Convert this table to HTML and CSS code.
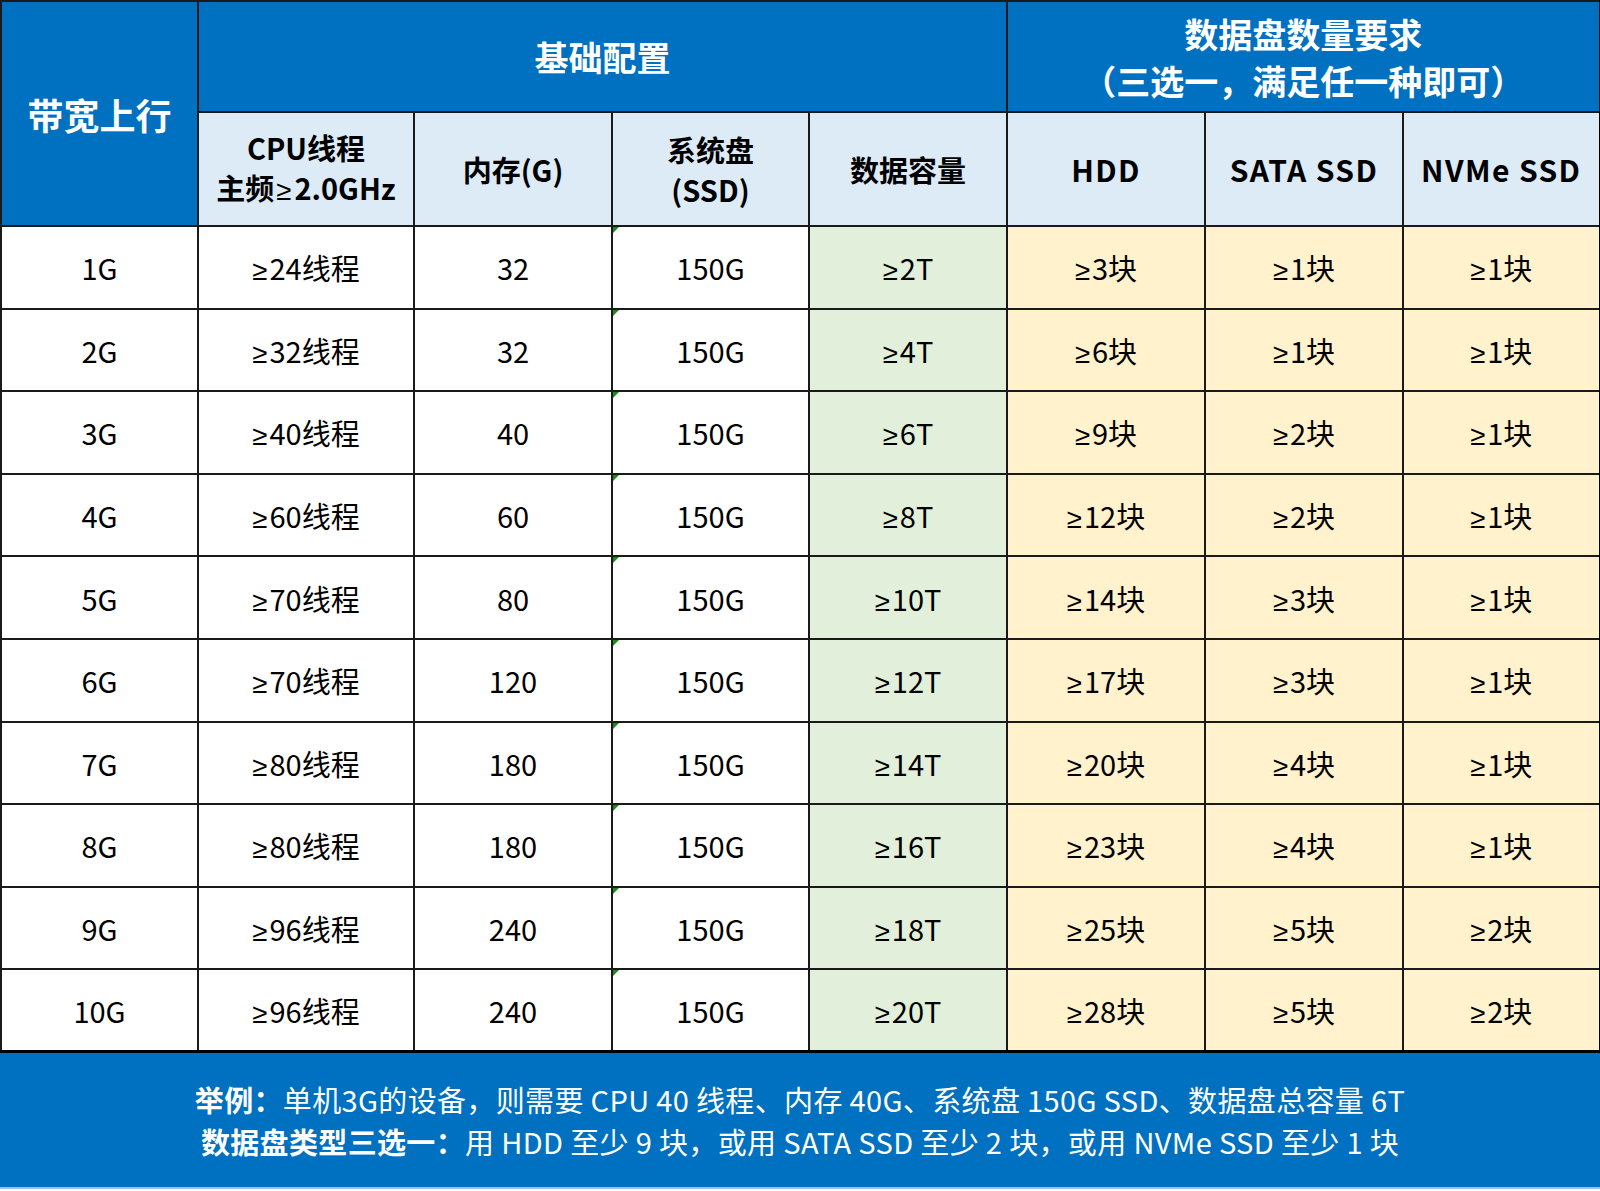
FILE: index.html
```html
<!DOCTYPE html>
<html lang="zh-CN">
<head>
<meta charset="utf-8">
<title>带宽配置要求</title>
<link rel="stylesheet" href="styles.css">
</head>
<body>
<div class="sheet">
  <table class="spec">
    <colgroup>
      <col class="c1"><col class="c2"><col class="c3"><col class="c4">
      <col class="c5"><col class="c6"><col class="c7"><col class="c8">
    </colgroup>
    <thead>
      <tr class="h1">
        <th class="blue big" rowspan="2">带宽上行</th>
        <th class="blue group" colspan="4">基础配置</th>
        <th class="blue group two" colspan="3">数据盘数量要求<br>（三选一，满足任一种即可）</th>
      </tr>
      <tr class="h2">
        <th class="sub">CPU线程<br>主频<span class="ge">≥</span>2.0GHz</th>
        <th class="sub">内存(G)</th>
        <th class="sub">系统盘<br>(SSD)</th>
        <th class="sub">数据容量</th>
        <th class="sub en">HDD</th>
        <th class="sub en">SATA SSD</th>
        <th class="sub en">NVMe SSD</th>
      </tr>
    </thead>
    <tbody>
      <tr><td>1G</td><td><span class="ge">≥</span>24线程</td><td>32</td><td class="flag">150G</td><td class="green"><span class="ge">≥</span>2T</td><td class="yellow"><span class="ge">≥</span>3块</td><td class="yellow"><span class="ge">≥</span>1块</td><td class="yellow"><span class="ge">≥</span>1块</td></tr>
      <tr><td>2G</td><td><span class="ge">≥</span>32线程</td><td>32</td><td class="flag">150G</td><td class="green"><span class="ge">≥</span>4T</td><td class="yellow"><span class="ge">≥</span>6块</td><td class="yellow"><span class="ge">≥</span>1块</td><td class="yellow"><span class="ge">≥</span>1块</td></tr>
      <tr><td>3G</td><td><span class="ge">≥</span>40线程</td><td>40</td><td class="flag">150G</td><td class="green"><span class="ge">≥</span>6T</td><td class="yellow"><span class="ge">≥</span>9块</td><td class="yellow"><span class="ge">≥</span>2块</td><td class="yellow"><span class="ge">≥</span>1块</td></tr>
      <tr><td>4G</td><td><span class="ge">≥</span>60线程</td><td>60</td><td class="flag">150G</td><td class="green"><span class="ge">≥</span>8T</td><td class="yellow"><span class="ge">≥</span>12块</td><td class="yellow"><span class="ge">≥</span>2块</td><td class="yellow"><span class="ge">≥</span>1块</td></tr>
      <tr><td>5G</td><td><span class="ge">≥</span>70线程</td><td>80</td><td class="flag">150G</td><td class="green"><span class="ge">≥</span>10T</td><td class="yellow"><span class="ge">≥</span>14块</td><td class="yellow"><span class="ge">≥</span>3块</td><td class="yellow"><span class="ge">≥</span>1块</td></tr>
      <tr><td>6G</td><td><span class="ge">≥</span>70线程</td><td>120</td><td class="flag">150G</td><td class="green"><span class="ge">≥</span>12T</td><td class="yellow"><span class="ge">≥</span>17块</td><td class="yellow"><span class="ge">≥</span>3块</td><td class="yellow"><span class="ge">≥</span>1块</td></tr>
      <tr><td>7G</td><td><span class="ge">≥</span>80线程</td><td>180</td><td class="flag">150G</td><td class="green"><span class="ge">≥</span>14T</td><td class="yellow"><span class="ge">≥</span>20块</td><td class="yellow"><span class="ge">≥</span>4块</td><td class="yellow"><span class="ge">≥</span>1块</td></tr>
      <tr><td>8G</td><td><span class="ge">≥</span>80线程</td><td>180</td><td class="flag">150G</td><td class="green"><span class="ge">≥</span>16T</td><td class="yellow"><span class="ge">≥</span>23块</td><td class="yellow"><span class="ge">≥</span>4块</td><td class="yellow"><span class="ge">≥</span>1块</td></tr>
      <tr><td>9G</td><td><span class="ge">≥</span>96线程</td><td>240</td><td class="flag">150G</td><td class="green"><span class="ge">≥</span>18T</td><td class="yellow"><span class="ge">≥</span>25块</td><td class="yellow"><span class="ge">≥</span>5块</td><td class="yellow"><span class="ge">≥</span>2块</td></tr>
      <tr><td>10G</td><td><span class="ge">≥</span>96线程</td><td>240</td><td class="flag">150G</td><td class="green"><span class="ge">≥</span>20T</td><td class="yellow"><span class="ge">≥</span>28块</td><td class="yellow"><span class="ge">≥</span>5块</td><td class="yellow"><span class="ge">≥</span>2块</td></tr>
    </tbody>
  </table>
  <div class="note">
    <p><b>举例：</b>单机3G的设备，则需要 CPU 40 线程、内存 40G、系统盘 150G SSD、数据盘总容量 6T</p>
    <p><b>数据盘类型三选一：</b>用 HDD 至少 9 块，或用 SATA SSD 至少 2 块，或用 NVMe SSD 至少 1 块</p>
  </div>
</div>
</body>
</html>
```
FILE: styles.css
```css
html, body {
  margin: 0;
  padding: 0;
  background: #ffffff;
}

body {
  font-family: "Noto Sans CJK SC", "Noto Sans", sans-serif;
  color: #000;
}

.sheet {
  width: 1600px;
}

.spec {
  width: 1599px;
  table-layout: fixed;
  border-collapse: collapse;
  border-top: 2px solid #0b5a9c;
  border-left: 2px solid #0b5a9c;
  border-right: 3px solid #000;
  border-bottom: 3px solid #000;
}

.c1 { width: 197px; }
.c2 { width: 216px; }
.c3 { width: 198px; }
.c4 { width: 197px; }
.c5 { width: 198px; }
.c6 { width: 198px; }
.c7 { width: 198px; }
.c8 { width: 197px; }

.spec th,
.spec td {
  border: 2px solid #1a1a1a;
  padding: 0;
  text-align: center;
  vertical-align: middle;
}

.h1 { height: 111px; }
.h2 { height: 114px; }
.spec tbody tr { height: 82.6px; }

.blue {
  background: #0070c0;
  color: #ffffff;
  font-weight: 700;
}

.big {
  font-size: 36px;
  padding-bottom: 6px;
}

.group {
  font-size: 34px;
  line-height: 47px;
}

.two {
  padding-bottom: 4px;
}

.sub {
  background: #ddebf7;
  font-size: 29px;
  font-weight: 700;
  line-height: 40px;
}

.sub.en {
  font-size: 30px;
  letter-spacing: 1.4px;
}

.ge {
  font-family: "Liberation Sans", sans-serif;
  font-size: 0.95em;
  font-weight: 400;
  margin-right: 2px;
}

.sub .ge {
  margin: 0 3px 0 2px;
}

.spec td {
  font-size: 29px;
  font-weight: 400;
  background: #ffffff;
}

.spec td.green { background: #e2efda; }
.spec td.yellow { background: #fff2cc; }

.spec td.flag {
  position: relative;
}

.spec td.flag::before {
  content: "";
  position: absolute;
  left: 0;
  top: 0;
  width: 0;
  height: 0;
  border-top: 6px solid #1e8a1e;
  border-right: 6px solid transparent;
}

.note {
  background: #0070c0;
  color: #ffffff;
  height: 134px;
  border-bottom: 2px solid #9dc3e6;
  display: flex;
  flex-direction: column;
  justify-content: center;
  align-items: center;
  font-size: 29px;
  line-height: 42px;
  letter-spacing: 0.35px;
}

.note p {
  margin: 0;
}

.note b {
  font-weight: 700;
}
```
